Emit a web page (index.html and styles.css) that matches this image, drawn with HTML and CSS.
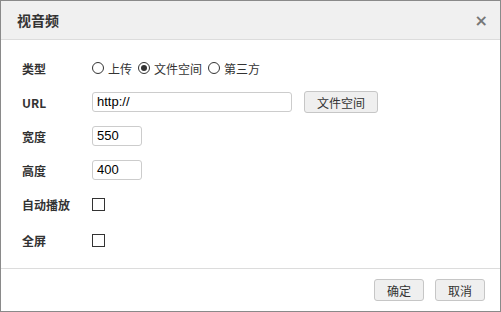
FILE: index.html
```html
<!DOCTYPE html>
<html lang="zh-CN">

<head>
  <meta charset="UTF-8" />
  <meta name="viewport" content="width=device-width, initial-scale=1.0" />
  <title>视音频</title>
  <link rel="stylesheet" href="styles.css">
</head>

<body>
  <div class="dialog">
    <div class="dialog-header">
      <span class="dialog-title">视音频</span>
      <span class="dialog-close">×</span>
    </div>

    <div class="dialog-body">
      <div class="row">
        <div class="label">类型</div>
        <div class="field">
          <span class="radio"></span><span class="opt">上传</span>
          <span class="radio checked"></span><span class="opt">文件空间</span>
          <span class="radio"></span><span class="opt">第三方</span>
        </div>
      </div>
      <div class="row">
        <div class="label">URL</div>
        <div class="field">
          <div class="input input-url">http://</div>
          <button class="btn btn-space">文件空间</button>
        </div>
      </div>
      <div class="row">
        <div class="label">宽度</div>
        <div class="field">
          <div class="input input-num">550</div>
        </div>
      </div>
      <div class="row">
        <div class="label">高度</div>
        <div class="field">
          <div class="input input-num">400</div>
        </div>
      </div>
      <div class="row row-tall">
        <div class="label">自动播放</div>
        <div class="field">
          <span class="checkbox"></span>
        </div>
      </div>
      <div class="row row-tall">
        <div class="label">全屏</div>
        <div class="field">
          <span class="checkbox"></span>
        </div>
      </div>
    </div>

    <div class="dialog-footer">
      <button class="btn">确定</button>
      <button class="btn">取消</button>
    </div>
  </div>
</body>

</html>
```

FILE: styles.css
```css
body {
  margin: 0;
  padding: 0;
  font-family: 'Noto Sans CJK SC', 'Noto Sans', sans-serif;
  font-size: 12px;
  color: #333;
  background-color: #fff;
}

.dialog {
  box-sizing: border-box;
  width: 501px;
  height: 312px;
  border: 1px solid #8a8a8a;
  display: flex;
  flex-direction: column;
  background-color: #fff;
}

.dialog-header {
  height: 38px;
  background-color: #f0f0f0;
  border-bottom: 1px solid #dcdcdc;
  display: flex;
  align-items: center;
  justify-content: space-between;
  padding: 0 12px 0 16px;
}

.dialog-title {
  font-size: 14px;
  font-weight: bold;
  color: #333;
}

.dialog-close {
  font-family: 'DejaVu Sans', sans-serif;
  font-size: 16px;
  font-weight: bold;
  color: #777;
}

.dialog-body {
  flex: 1;
  padding: 11px 0 0 21px;
}

.row {
  display: flex;
  align-items: center;
  height: 34px;
}

.row-tall {
  height: 35.5px;
}

.label {
  width: 70px;
  font-weight: bold;
  color: #333;
}

.field {
  display: flex;
  align-items: center;
}

.radio {
  box-sizing: border-box;
  width: 12px;
  height: 12px;
  border: 1px solid #333;
  border-radius: 50%;
  margin-right: 4px;
  display: flex;
  align-items: center;
  justify-content: center;
}

.radio.checked::after {
  content: "";
  width: 6px;
  height: 6px;
  border-radius: 50%;
  background-color: #333;
}

.opt {
  margin-right: 6px;
}

.input {
  box-sizing: border-box;
  height: 20px;
  border: 1px solid #ccc;
  border-radius: 3px;
  padding: 0 4px;
  line-height: 18px;
  font-family: 'Liberation Sans', 'Noto Sans', sans-serif;
  font-size: 13px;
  color: #000;
}

.input-url {
  width: 200px;
}

.input-num {
  width: 50px;
}

.btn {
  box-sizing: border-box;
  height: 22px;
  padding: 0 12px;
  border: 1px solid #c6c6c6;
  border-radius: 3px;
  background-color: #efefef;
  font-family: 'Noto Sans CJK SC', 'Noto Sans', sans-serif;
  font-size: 12px;
  color: #333;
}

.btn-space {
  margin-left: 12px;
}

.checkbox {
  box-sizing: border-box;
  width: 13px;
  height: 13px;
  border: 1px solid #333;
}

.dialog-footer {
  height: 42px;
  border-top: 1px solid #dcdcdc;
  display: flex;
  align-items: center;
  justify-content: flex-end;
  gap: 11px;
  padding-right: 15px;
}
```
